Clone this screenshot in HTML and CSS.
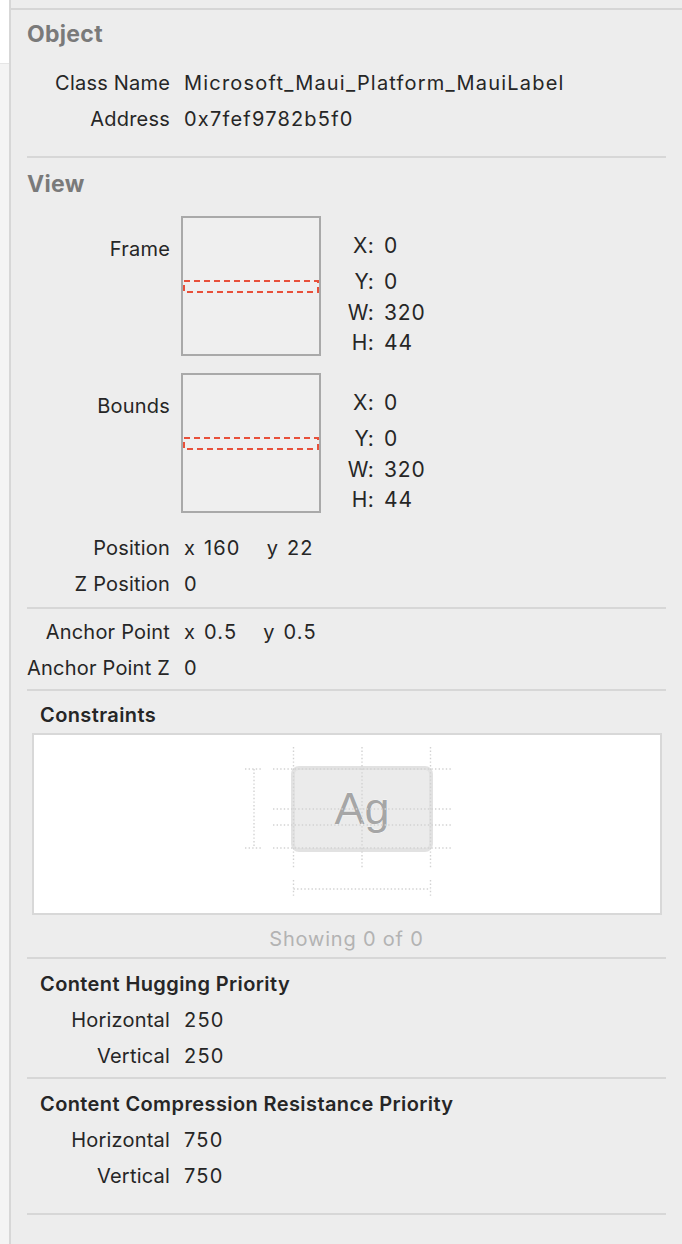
FILE: index.html
```html
<!DOCTYPE html>
<html>
<head>
<meta charset="utf-8">
<link rel="stylesheet" href="styles.css">
</head>
<body>
<div class="app">
  <div class="gutter"><div class="gutter-top"></div></div>
  <div class="panel">
    <div class="panel-inner">

      <section class="sec sec-object">
        <h2 class="sec-title">Object</h2>
        <div class="rows">
          <div class="row"><span class="key">Class Name</span><span class="val">Microsoft_Maui_Platform_MauiLabel</span></div>
          <div class="row"><span class="key">Address</span><span class="val">0x7fef9782b5f0</span></div>
        </div>
      </section>

      <section class="sec sec-view">
        <h2 class="sec-title">View</h2>
        <div class="rect-row">
          <span class="key rect-key">Frame</span>
          <div class="rect-box">
            <svg class="dash" viewBox="0 0 136 13" preserveAspectRatio="none"><rect x="1" y="1" width="134" height="11" fill="none" stroke="#e8503a" stroke-width="2" stroke-dasharray="6 4"/></svg>
          </div>
          <div class="xywh">
            <div class="xy xy-x"><span class="xk">X:</span><span class="xv">0</span></div>
            <div class="xy xy-y"><span class="xk">Y:</span><span class="xv">0</span></div>
            <div class="xy xy-w"><span class="xk">W:</span><span class="xv">320</span></div>
            <div class="xy xy-h"><span class="xk">H:</span><span class="xv">44</span></div>
          </div>
        </div>
        <div class="rect-row rect-row-2">
          <span class="key rect-key">Bounds</span>
          <div class="rect-box">
            <svg class="dash" viewBox="0 0 136 13" preserveAspectRatio="none"><rect x="1" y="1" width="134" height="11" fill="none" stroke="#e8503a" stroke-width="2" stroke-dasharray="6 4"/></svg>
          </div>
          <div class="xywh">
            <div class="xy xy-x"><span class="xk">X:</span><span class="xv">0</span></div>
            <div class="xy xy-y"><span class="xk">Y:</span><span class="xv">0</span></div>
            <div class="xy xy-w"><span class="xk">W:</span><span class="xv">320</span></div>
            <div class="xy xy-h"><span class="xk">H:</span><span class="xv">44</span></div>
          </div>
        </div>
        <div class="rows rows-pos">
          <div class="row"><span class="key">Position</span><span class="val"><span class="axis">x</span>160<span class="axis axis-y">y</span>22</span></div>
          <div class="row"><span class="key">Z Position</span><span class="val">0</span></div>
        </div>
      </section>

      <section class="sec sec-anchor">
        <div class="rows">
          <div class="row"><span class="key">Anchor Point</span><span class="val"><span class="axis">x</span>0.5<span class="axis axis-y">y</span>0.5</span></div>
          <div class="row"><span class="key">Anchor Point Z</span><span class="val">0</span></div>
        </div>
      </section>

      <section class="sec sec-constraints">
        <h3 class="sub-title sub-constraints">Constraints</h3>
        <div class="cbox">
          <svg class="cdiagram" viewBox="0 0 626 178">
            <g transform="translate(-34,-735)">
              <rect x="293" y="768" width="138" height="82" rx="6" fill="#ebebeb" stroke="#e2e2e2" stroke-width="4"/>
              <text x="362" y="824" text-anchor="middle" font-family="Liberation Sans, Arial, sans-serif" font-size="45" fill="#a6a6a6" stroke="#ffffff" stroke-width="0.6" paint-order="stroke">Ag</text>
              <g stroke="#d2d2d2" stroke-width="1.4" stroke-dasharray="1.4 2.2" fill="none">
                <line x1="293.5" y1="747" x2="293.5" y2="869"/>
                <line x1="362" y1="747" x2="362" y2="869"/>
                <line x1="430.5" y1="747" x2="430.5" y2="869"/>
                <line x1="245" y1="769" x2="263" y2="769"/>
                <line x1="273" y1="769" x2="451" y2="769"/>
                <line x1="273" y1="809" x2="451" y2="809"/>
                <line x1="273" y1="825" x2="451" y2="825"/>
                <line x1="245" y1="848" x2="263" y2="848"/>
                <line x1="273" y1="848" x2="451" y2="848"/>
                <line x1="254" y1="769" x2="254" y2="848"/>
                <line x1="293.5" y1="889" x2="430.5" y2="889"/>
                <line x1="293.5" y1="880" x2="293.5" y2="897"/>
                <line x1="430.5" y1="880" x2="430.5" y2="897"/>
              </g>
            </g>
          </svg>
        </div>
        <div class="showing">Showing 0 of 0</div>
      </section>

      <section class="sec sec-hug">
        <h3 class="sub-title">Content Hugging Priority</h3>
        <div class="rows">
          <div class="row"><span class="key">Horizontal</span><span class="val">250</span></div>
          <div class="row"><span class="key">Vertical</span><span class="val">250</span></div>
        </div>
      </section>

      <section class="sec sec-comp">
        <h3 class="sub-title">Content Compression Resistance Priority</h3>
        <div class="rows">
          <div class="row"><span class="key">Horizontal</span><span class="val">750</span></div>
          <div class="row"><span class="key">Vertical</span><span class="val">750</span></div>
        </div>
      </section>

    </div>
  </div>
</div>
</body>
</html>
```

FILE: styles.css
```css
* { box-sizing: border-box; }
html, body { margin: 0; padding: 0; }
body {
  background: #ededed;
  font-family: Inter, "Liberation Sans", Arial, sans-serif;
  color: #262626;
  font-size: 20px;
}
.app {
  display: flex;
  height: 1244px;
  overflow: hidden;
}
.gutter {
  width: 11px;
  flex: none;
  background: #f4f4f4;
  border-right: 2px solid #d7d7d7;
}
.gutter-top {
  height: 64px;
  background: #ffffff;
  border-bottom: 1px solid #e6e6e6;
}
.panel {
  flex: 1;
  padding-top: 8px;
}
.panel-inner {
  border-top: 2px solid #d6d6d6;
  padding: 0 16px 0 16px;
}
.sec {
  border-bottom: 2px solid #d7d7d7;
}
.sec-title {
  margin: 0;
  height: 48px;
  line-height: 48px;
  font-size: 23px;
  letter-spacing: 0.3px;
  font-weight: 700;
  color: #7a7a7a;
}
.sec-view .sec-title {
  height: 52px;
  line-height: 52px;
}
.rows { margin-top: 6px; }
.row {
  display: flex;
  height: 37px;
  align-items: center;
}
.sec-object .row + .row { height: 36px; }
.key {
  width: 143px;
  flex: none;
  text-align: right;
  white-space: nowrap;
  letter-spacing: 0.2px;
}
.val {
  margin-left: 14px;
  white-space: nowrap;
  letter-spacing: 1.2px;
}
.sec-object { padding-bottom: 19px; }

.axis { margin-right: 9px; letter-spacing: 0; }
.axis-y { margin-left: 26px; }

.rect-row {
  display: flex;
  margin-top: 6px;
}
.rect-row-2 { margin-top: 16px; }
.rect-key {
  padding-top: 18px;
  line-height: 30px;
}
.rect-box {
  margin-left: 11px;
  width: 140px;
  height: 140px;
  border: 2px solid #a9a9a9;
  background: #efefef;
  display: flex;
  align-items: center;
}
.dash {
  display: block;
  width: 136px;
  height: 13px;
}
.xywh {
  margin-left: 12px;
  padding-top: 14px;
}
.xy {
  display: flex;
  height: 30px;
  align-items: center;
  font-size: 21px;
}
.xy-y { margin-top: 6px; }
.xy-w { margin-top: 1px; }
.xk {
  width: 41px;
  text-align: right;
  letter-spacing: 0.3px;
}
.xv { margin-left: 10px; letter-spacing: 0.9px; }

.rows-pos { margin-top: 16px; }
.rows-pos .row { height: 36px; }
.sec-view { padding-bottom: 5px; }

.sec-anchor .rows { margin-top: 5px; }
.sec-anchor .row { height: 36px; }
.sec-anchor { padding-bottom: 3px; }

.sub-title {
  margin: 0;
  padding: 12px 0 0 13px;
  line-height: 26px;
  font-size: 20px;
  font-weight: 600;
  letter-spacing: 0.4px;
  color: #262626;
}
.sub-constraints {
  padding-top: 11px;
  height: 42px;
}
.cbox {
  margin: 0 4px 0 5px;
  height: 182px;
  background: #ffffff;
  border: 2px solid #d8d8d8;
}
.cdiagram {
  display: block;
  width: 626px;
  height: 178px;
}
.showing {
  height: 42px;
  padding-top: 6px;
  line-height: 36px;
  text-align: center;
  color: #b3b3b3;
  font-size: 20px;
  letter-spacing: 0.8px;
}
.sec-hug .rows, .sec-comp .rows { margin-top: 5px; }
.sec-hug .row, .sec-comp .row { height: 36px; }
.sec-hug { padding-bottom: 3px; }
.sec-comp { padding-bottom: 19px; }
```
